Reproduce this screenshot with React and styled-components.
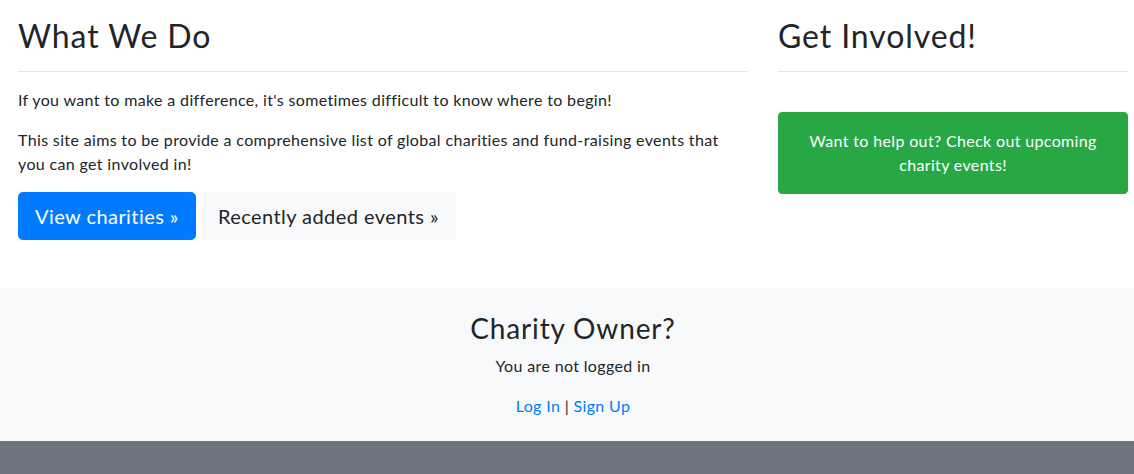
import React from 'react';
import styled, { createGlobalStyle } from 'styled-components';

const GlobalStyle = createGlobalStyle`
  html, body {
    margin: 0;
    padding: 0;
    background: #fff;
  }
  body {
    font-family: Lato, "Noto Sans", sans-serif;
    font-size: 16px;
    line-height: 1.5;
    letter-spacing: 0.022em;
    color: #212529;
  }
  * {
    box-sizing: border-box;
  }
`;

const Page = styled.div`
  display: flex;
  flex-direction: column;
  min-height: 474px;
  overflow: hidden;
`;

const Main = styled.div`
  display: flex;
  gap: 30px;
  padding: 17px 0 48px 18px;
`;

const Column = styled.div`
  width: ${props => props.width}px;
  flex-shrink: 0;
`;

const Heading = styled.h2`
  margin: 0 0 8px;
  font-size: 32px;
  font-weight: 400;
  line-height: 1.2;
  letter-spacing: 0.028em;
`;

const Rule = styled.hr`
  margin: 16px 0;
  border: 0;
  border-top: 1px solid rgba(0, 0, 0, 0.1);
`;

const Text = styled.p`
  margin: 0 0 16px;
`;

const ButtonRow = styled.div`
  display: flex;
  gap: 5px;
`;

const BigButton = styled.a`
  display: inline-block;
  padding: 8px 16px;
  font-size: 20px;
  line-height: 1.5;
  letter-spacing: 0.022em;
  border: 1px solid ${props => (props.primary ? '#007bff' : '#f8f9fa')};
  border-radius: 4.8px;
  background: ${props => (props.primary ? '#007bff' : '#f8f9fa')};
  color: ${props => (props.primary ? '#fff' : '#212529')};
  text-decoration: none;
  cursor: pointer;
`;

const CallOut = styled.div`
  margin-top: 40px;
  padding: 16px;
  border: 1px solid #28a745;
  border-radius: 4px;
  background: #28a745;
  color: #fff;
  text-align: center;
`;

const OwnerSection = styled.section`
  background: #f8f9fa;
  padding: 24px 0 7px 12px;
  text-align: center;
`;

const OwnerHeading = styled.h3`
  margin: 0 0 8px;
  font-size: 28px;
  font-weight: 400;
  line-height: 1.2;
  letter-spacing: 0.03em;
`;

const Link = styled.a`
  color: #007bff;
  text-decoration: none;
  cursor: pointer;
`;

const Footer = styled.footer`
  flex: 1;
  background: #6c757d;
  min-height: 40px;
`;

const App = () => (
  <>
    <GlobalStyle />
    <Page>
      <Main>
        <Column width={730}>
          <Heading>What We Do</Heading>
          <Rule />
          <Text>If you want to make a difference, it's sometimes difficult to know where to begin!</Text>
          <Text>
            This site aims to be provide a comprehensive list of global charities and fund-raising events that
            you can get involved in!
          </Text>
          <ButtonRow>
            <BigButton primary>View charities &raquo;</BigButton>
            <BigButton>Recently added events &raquo;</BigButton>
          </ButtonRow>
        </Column>
        <Column width={350}>
          <Heading>Get Involved!</Heading>
          <Rule />
          <CallOut>Want to help out? Check out upcoming charity events!</CallOut>
        </Column>
      </Main>
      <OwnerSection>
        <OwnerHeading>Charity Owner?</OwnerHeading>
        <Text>You are not logged in</Text>
        <Text>
          <Link>Log In</Link> | <Link>Sign Up</Link>
        </Text>
      </OwnerSection>
      <Footer />
    </Page>
  </>
);

export default App;
